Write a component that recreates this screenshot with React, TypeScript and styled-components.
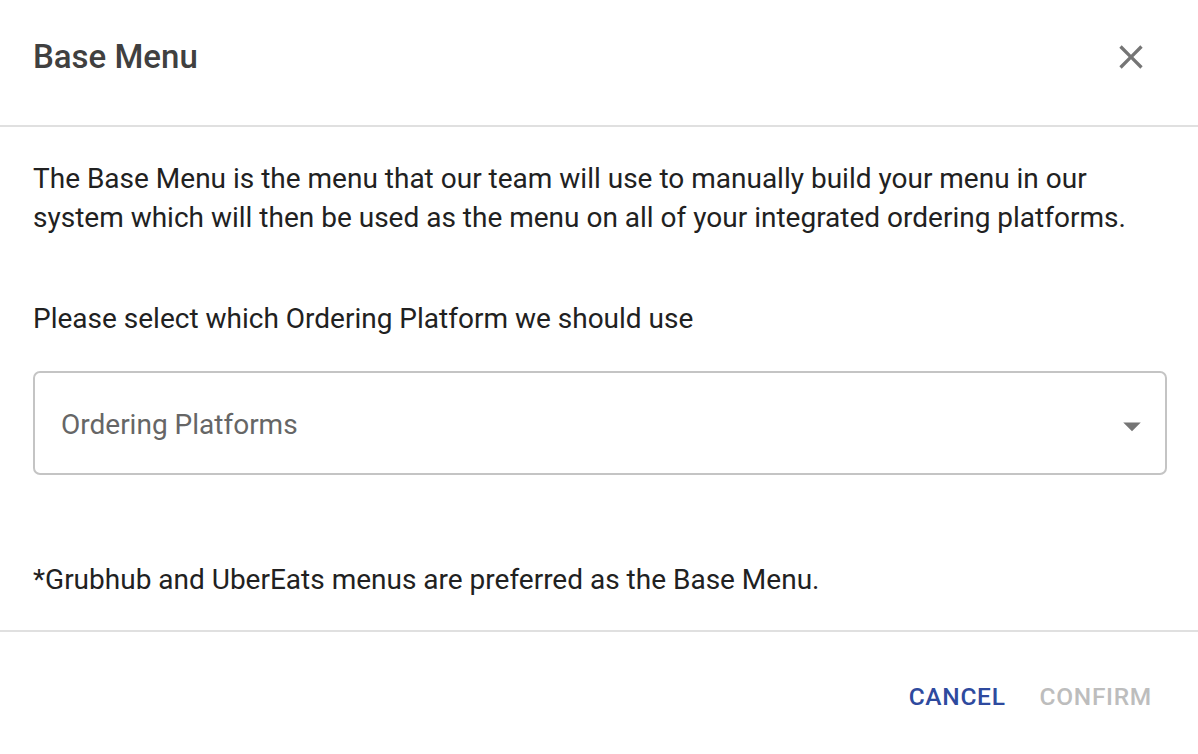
import styled, { createGlobalStyle } from "styled-components";

const GlobalStyle = createGlobalStyle`
  html, body {
    margin: 0;
    padding: 0;
    background: #ffffff;
  }
  body {
    font-family: Roboto, "Liberation Sans", Arial, sans-serif;
    -webkit-font-smoothing: antialiased;
  }
`;

const Dialog = styled.div`
  width: 1198px;
  height: 754px;
  background: #ffffff;
  display: flex;
  flex-direction: column;
  overflow: hidden;
`;

const Header = styled.div`
  display: flex;
  align-items: center;
  justify-content: space-between;
  padding: 29px 47px 40px 33px;
  border-bottom: 2px solid #e0e0e0;
`;

const Title = styled.h2`
  margin: 0;
  font-size: 33px;
  font-weight: 500;
  line-height: 56px;
  color: #404040;
`;

const CloseButton = styled.button`
  border: 0;
  background: none;
  padding: 0;
  width: 40px;
  height: 40px;
  display: flex;
  align-items: center;
  justify-content: center;
  color: #757575;
  cursor: pointer;
`;

const Content = styled.div`
  display: flex;
  flex-direction: column;
  padding: 32px 20px 31px 33px;
  border-bottom: 2px solid #e0e0e0;
`;

const Text = styled.p<{ $gap?: number }>`
  margin: 0;
  margin-top: ${(p) => p.$gap ?? 0}px;
  font-size: 28px;
  line-height: 39.2px;
  color: #212121;
`;

const Select = styled.div`
  margin-top: 32px;
  margin-right: 11px;
  height: 104px;
  box-sizing: border-box;
  border: 2px solid #c4c4c4;
  border-radius: 7px;
  display: flex;
  align-items: center;
  justify-content: space-between;
  padding: 0 12px 0 26px;
`;

const Placeholder = styled.span`
  font-size: 28px;
  color: #666666;
  margin-top: 4px;
`;

const Arrow = styled.svg`
  width: 42px;
  height: 42px;
  fill: #757575;
  margin-top: 6px;
`;

const Footer = styled.div`
  display: flex;
  justify-content: flex-end;
  gap: 6px;
  padding: 33px 32px 0 0;
`;

const TextButton = styled.button<{ $disabled?: boolean }>`
  border: 0;
  background: none;
  font-family: Roboto, "Liberation Sans", Arial, sans-serif;
  font-size: 24.5px;
  font-weight: 500;
  letter-spacing: 0.7px;
  line-height: 43px;
  padding: 10px 14px;
  text-transform: uppercase;
  color: ${(p) => (p.$disabled ? "#bdbdbd" : "#2e4a9e")};
  cursor: ${(p) => (p.$disabled ? "default" : "pointer")};
`;

export default function App() {
  return (
    <>
      <GlobalStyle />
      <Dialog>
        <Header>
          <Title>Base Menu</Title>
          <CloseButton aria-label="close">
            <svg width="40" height="40" viewBox="0 0 24 24" fill="currentColor">
              <path d="M19 6.41 17.59 5 12 10.59 6.41 5 5 6.41 10.59 12 5 17.59 6.41 19 12 13.41 17.59 19 19 17.59 13.41 12z" />
            </svg>
          </CloseButton>
        </Header>
        <Content>
          <Text>
            The Base Menu is the menu that our team will use to manually build your menu in our
            system which will then be used as the menu on all of your integrated ordering platforms.
          </Text>
          <Text $gap={62}>Please select which Ordering Platform we should use</Text>
          <Select>
            <Placeholder>Ordering Platforms</Placeholder>
            <Arrow viewBox="0 0 24 24">
              <path d="M7 10l5 5 5-5z" />
            </Arrow>
          </Select>
          <Text $gap={85}>*Grubhub and UberEats menus are preferred as the Base Menu.</Text>
        </Content>
        <Footer>
          <TextButton>Cancel</TextButton>
          <TextButton $disabled>Confirm</TextButton>
        </Footer>
      </Dialog>
    </>
  );
}
